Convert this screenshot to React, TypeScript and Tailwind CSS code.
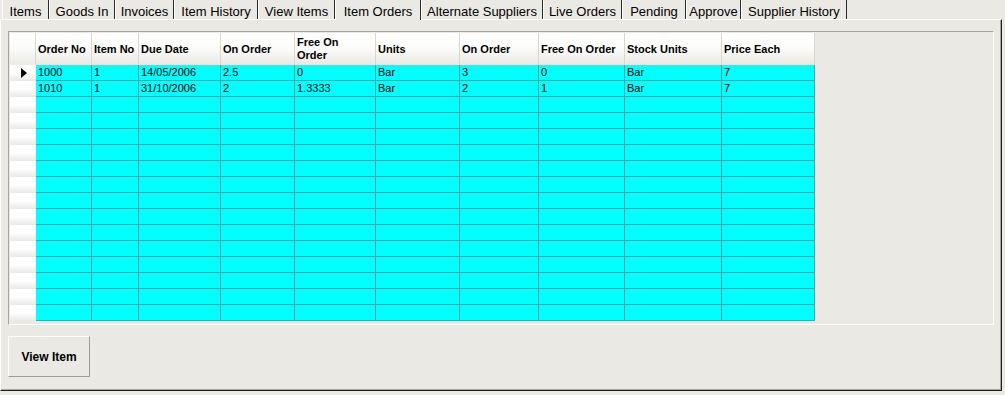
import React from 'react';

const tabs: { label: string; w: number }[] = [
  { label: 'Items', w: 47 },
  { label: 'Goods In', w: 66 },
  { label: 'Invoices', w: 59 },
  { label: 'Item History', w: 84 },
  { label: 'View Items', w: 77 },
  { label: 'Item Orders', w: 86 },
  { label: 'Alternate Suppliers', w: 122 },
  { label: 'Live Orders', w: 79 },
  { label: 'Pending', w: 64 },
  { label: 'Approve', w: 55 },
  { label: 'Supplier History', w: 106 },
];

const ACTIVE = 'Item Orders';

const columns: { title: string[]; w: number }[] = [
  { title: ['Order No'], w: 56 },
  { title: ['Item No'], w: 47 },
  { title: ['Due Date'], w: 82 },
  { title: ['On Order'], w: 74 },
  { title: ['Free On', 'Order'], w: 81 },
  { title: ['Units'], w: 84 },
  { title: ['On Order'], w: 79 },
  { title: ['Free On Order'], w: 86 },
  { title: ['Stock Units'], w: 97 },
  { title: ['Price Each'], w: 93 },
];

const rows: string[][] = [
  ['1000', '1', '14/05/2006', '2.5', '0', 'Bar', '3', '0', 'Bar', '7'],
  ['1010', '1', '31/10/2006', '2', '1.3333', 'Bar', '2', '1', 'Bar', '7'],
  ...Array.from({ length: 14 }, () => Array(10).fill('')),
];

const App: React.FC = () => {
  return (
    <div className="w-[1005px] h-[395px] bg-[#ebe9e3] font-['Liberation_Sans',Arial,sans-serif] text-black overflow-hidden">
      {/* Tab strip */}
      <div className="flex h-[19px] pl-[2px]">
        {tabs.map((t) => (
          <div
            key={t.label}
            style={{ width: t.w }}
            className={`h-[19px] shrink-0 border-l border-white border-r border-r-[#2a2a2a] text-[13px] leading-[17px] pt-[3px] text-center whitespace-nowrap ${
              t.label === ACTIVE ? 'relative z-10 h-[20px] bg-[#ebe9e3]' : ''
            }`}
          >
            {t.label}
          </div>
        ))}
      </div>

      {/* Tab panel */}
      <div className="w-[1002px] h-[372px] border-t border-l border-white border-r border-b border-r-[#1e1e1e] border-b-[#1e1e1e]">
        <div className="h-full border-r border-b border-r-[#a8a6a0] border-b-[#a8a6a0] pl-[7px] pt-[11px]">
          {/* Grid */}
          <div className="w-[986px] h-[294px] border-t border-l border-[#a4a39d] border-r border-b border-r-white border-b-white pl-px pt-px overflow-hidden">
            {/* Header */}
            <div className="flex h-[32px]">
              <div className="w-[26px] h-[32px] bg-gradient-to-b from-white via-[#fafaf8] to-[#ebeae4] border-r border-[#d8d7d0]" />
              {columns.map((c, i) => (
                <div
                  key={i}
                  style={{ width: c.w }}
                  className="h-[32px] shrink-0 bg-gradient-to-b from-white via-[#fbfbf9] to-[#e9e8e2] border-r border-[#d8d7d0] pl-[2px] flex flex-col justify-center text-[11px] leading-[13px] font-bold"
                >
                  {c.title.map((l) => (
                    <span key={l}>{l}</span>
                  ))}
                </div>
              ))}
            </div>
            {/* Rows */}
            {rows.map((r, ri) => (
              <div key={ri} className="flex h-[16px]">
                <div className="w-[26px] h-[16px] bg-gradient-to-b from-white via-white to-[#e8e8e6] flex items-center pl-[11px]">
                  {ri === 0 && (
                    <svg width="6" height="10" viewBox="0 0 6 10">
                      <path d="M0 0 L6 5 L0 10 Z" fill="#000" />
                    </svg>
                  )}
                </div>
                {r.map((v, ci) => (
                  <div
                    key={ci}
                    style={{ width: columns[ci].w }}
                    className="h-[16px] shrink-0 bg-[#00ffff] border-r border-b border-[#5f9c9c] pl-[2px] text-[11px] leading-[15px] whitespace-nowrap"
                  >
                    {v}
                  </div>
                ))}
              </div>
            ))}
          </div>

          {/* Button */}
          <button className="mt-[11px] w-[82px] h-[41px] bg-[#ebe9e3] border-t border-l border-white border-r border-b border-r-[#9c9a94] border-b-[#9c9a94] text-[12px] font-bold">
            View Item
          </button>
        </div>
      </div>
    </div>
  );
};

export default App;
